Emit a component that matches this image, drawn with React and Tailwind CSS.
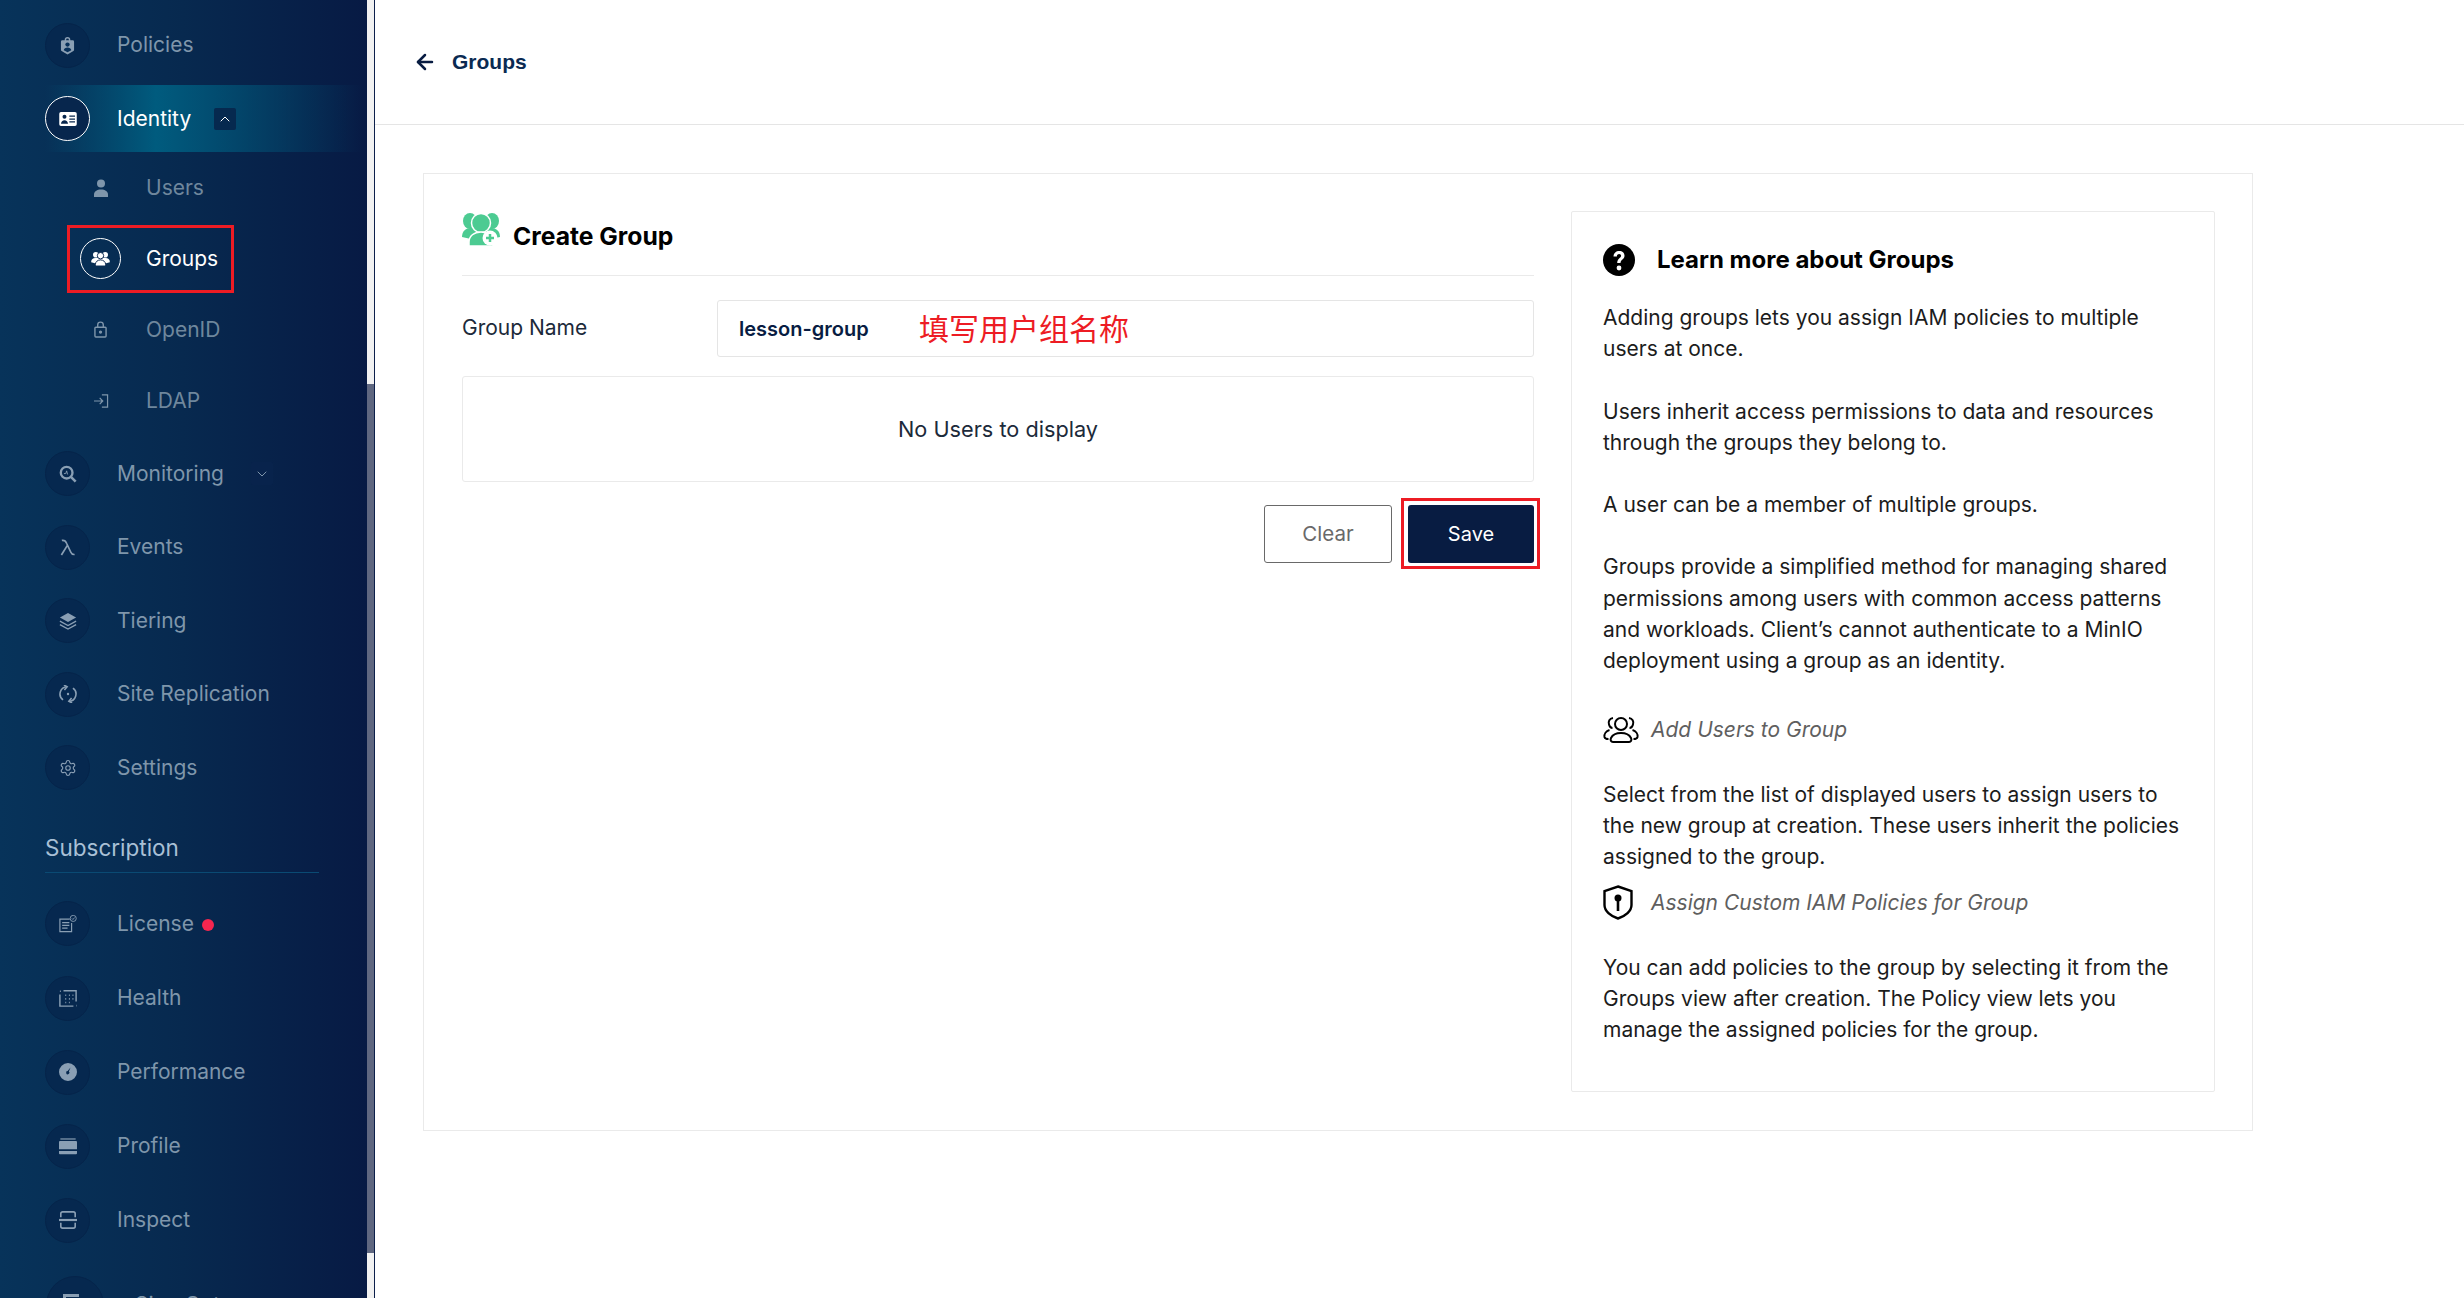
import { ArrowLeft, ChevronDown, ChevronUp, Settings } from "lucide-react"

const Shield = () => (
  <svg viewBox="0 0 16 20" className="w-[15px] h-[19px]" fill="currentColor">
    <path d="M5 4.500V4a3 3 0 0 1 6 0v.5h2.500A1.500 1.500 0 0 1 15 6v8.500c0 .5-.2 1-.7 1.300L8 19.500 1.700 15.800C1.200 15.500 1 15 1 14.500V6a1.500 1.500 0 0 1 1.500-1.500zM6.500 4.500h3V4a1.500 1.500 0 0 0-3 0z" />
    <circle cx="8" cy="9" r="2.300" fill="#07305a" />
    <path d="M4 15c.3-2 2-3 4-3s3.700 1 4 3l-4 2.300z" fill="#07305a" />
  </svg>
)

const IdCard = () => (
  <svg viewBox="0 0 20 16" className="w-[18px] h-[14px]" fill="currentColor">
    <path fillRule="evenodd" d="M2 0h16a2 2 0 0 1 2 2v12a2 2 0 0 1-2 2H2a2 2 0 0 1-2-2V2a2 2 0 0 1 2-2zM6 3.200a2.300 2.300 0 1 0 0 4.600 2.300 2.300 0 0 0 0-4.600zM2 13.500h8c0-2.500-1.800-4.200-4-4.200s-4 1.700-4 4.200zM11.500 4v1.500H18V4zM11.500 7.300v1.500H18V7.300zM11.500 10.500V12H18v-1.500z" />
  </svg>
)

const Person = () => (
  <svg viewBox="0 0 14 18" className="w-[14px] h-[18px]" fill="currentColor">
    <circle cx="7" cy="4.500" r="4" />
    <path d="M0 18v-2.500C0 12.500 3 10.500 7 10.500s7 2 7 5V18z" />
  </svg>
)

const Group = () => (
  <svg viewBox="0 0 20 16" className="w-[19px] h-[15px]" fill="currentColor">
    <circle cx="5" cy="4" r="3" />
    <circle cx="15" cy="4" r="3" />
    <path d="M0 12c0-3 2-4.500 4.500-4.500h11C18 7.500 20 9 20 12l-4 1H4z" />
    <circle cx="10" cy="5" r="3.400" stroke="#07244d" strokeWidth="1" />
    <path d="M4.500 16v-1.500C4.500 11.500 7 9.500 10 9.500s5.500 2 5.500 5V16z" stroke="#07244d" strokeWidth="1" />
  </svg>
)

const OpenLock = () => (
  <svg viewBox="0 0 14 18" className="w-[13px] h-[17px]" fill="none" stroke="currentColor" strokeWidth="1.500">
    <rect x="1" y="6.500" width="12" height="10.500" rx="1" />
    <path d="M4 6.500V4a3 3 0 0 1 6 0v2.500" />
    <circle cx="7" cy="11.800" r="1" fill="currentColor" />
  </svg>
)

const Login = () => (
  <svg viewBox="0 0 18 16" className="w-[16px] h-[14px]" fill="none" stroke="currentColor" strokeWidth="1.400">
    <path d="M10 1h6.500v14H10M1 8h10M7.500 4.500 11 8l-3.500 3.500" />
  </svg>
)

const Monitor = () => (
  <svg viewBox="0 0 20 20" className="w-[18px] h-[18px]" fill="none" stroke="currentColor">
    <circle cx="8.500" cy="8.500" r="6.500" strokeWidth="2.600" />
    <path d="M13.500 13.500 18.500 18.500" strokeWidth="2.800" />
    <path d="M5.500 9.500h2l1-3 1 4" strokeWidth="1" />
  </svg>
)

const Lambda = () => (
  <svg viewBox="0 0 18 18" className="w-[18px] h-[17px]" fill="none" stroke="currentColor" strokeWidth="1.800">
    <path d="M2.500 1.500c2.500-.5 4 .5 5 3L12 14c.7 1.700 1.800 2.600 4 2.400M8.500 6.500 2 17" />
  </svg>
)

const Layers = () => (
  <svg viewBox="0 0 20 20" className="w-[18px] h-[18px]" fill="currentColor">
    <path d="M10 1 19 6l-9 5-9-5z" />
    <path d="M1 10.200 10 15l9-4.800M1 14l9 5 9-5" fill="none" stroke="currentColor" strokeWidth="1.500" />
  </svg>
)

const Replicate = () => (
  <svg viewBox="0 0 20 20" className="w-[18px] h-[18px]" fill="none" stroke="currentColor" strokeWidth="1.800">
    <path d="M15.500 3.500A8 8 0 0 1 11 18M4.500 16.500A8 8 0 0 1 9 2" />
    <path d="M14 14.500 11 18l3.500 2M6 5.500 9 2 5.500 0" />
    <circle cx="10" cy="10" r="1.300" fill="currentColor" stroke="none" />
  </svg>
)

const License = () => (
  <svg viewBox="0 0 20 20" className="w-[18px] h-[18px]" fill="none" stroke="currentColor" strokeWidth="1.300">
    <path d="M12 4.500H1v14h13V9" />
    <path d="M3.500 8.500h8M3.500 11.500h8M3.500 14.500h6" />
    <circle cx="15.800" cy="3.800" r="3.400" strokeWidth="1" />
    <path d="m14.300 3.800 1.200 1.200 1.900-2.200" strokeWidth="1" />
  </svg>
)

const Health = () => (
  <svg viewBox="0 0 20 20" className="w-[18px] h-[18px]" fill="none" stroke="currentColor" strokeWidth="1.600">
    <path d="M5 2h14v12M1 6v13h15" />
    <path d="M1 2.500h1M19 18.500h.5M7 7h1M11 7h1M7 11h1M11 11h1M15 7h1M15 11h1M7 15h1M11 15h1" strokeWidth="1.800" />
  </svg>
)

const Gauge = () => (
  <svg viewBox="0 0 20 20" className="w-[18px] h-[18px]" fill="currentColor">
    <path fillRule="evenodd" d="M10 0a10 10 0 1 1 0 20 10 10 0 0 1 0-20zM11 9.500l1.800-4.500-3.200 4a1.800 1.800 0 1 0 1.400.500z" />
  </svg>
)

const Profile = () => (
  <svg viewBox="0 0 20 18" className="w-[18px] h-[17px]" fill="currentColor">
    <rect x="1.500" y="0" width="17" height="1.300" />
    <path d="M1 3h18a1 1 0 0 1 1 1v8H0V4a1 1 0 0 1 1-1z" />
    <path d="M0 14h20v2.500a1 1 0 0 1-1 1H1a1 1 0 0 1-1-1z" />
  </svg>
)

const Inspect = () => (
  <svg viewBox="0 0 20 20" className="w-[18px] h-[18px]" fill="none" stroke="currentColor" strokeWidth="1.800">
    <path d="M2 7V3a2 2 0 0 1 2-2h12a2 2 0 0 1 2 2v4M2 13v4a2 2 0 0 0 2 2h12a2 2 0 0 0 2-2v-4" />
    <path d="M0 10h20" strokeWidth="2.400" />
  </svg>
)

const TopItems = [
  { label: "Monitoring", icon: <Monitor />, h: "h-[73px]", chevron: true },
  { label: "Events", icon: <Lambda />, h: "h-[74px]" },
  { label: "Tiering", icon: <Layers />, h: "h-[73px]" },
  { label: "Site Replication", icon: <Replicate />, h: "h-[74px]" },
  { label: "Settings", icon: <Settings size={18} strokeWidth={1.5} />, h: "h-[73px]" },
]

const BottomItems = [
  { label: "License", icon: <License />, dot: true, h: "h-[75px]" },
  { label: "Health", icon: <Health /> },
  { label: "Performance", icon: <Gauge /> },
  { label: "Profile", icon: <Profile /> },
  { label: "Inspect", icon: <Inspect /> },
]

const NavItem = ({ label, icon, h = "h-[74px]", chevron, dot }) => (
  <div className={`${h} flex items-center pl-[45px] shrink-0`}>
    <div className="w-[45px] h-[45px] rounded-full bg-[#06284f] border border-[#05244a] flex items-center justify-center text-[#8a9fb4]">
      {icon}
    </div>
    <span className="ml-[27px] text-[21px] text-[#7f96ab]">{label}</span>
    {chevron && (
      <span className="ml-[27px] w-[22px] h-[23px] rounded-[2px] bg-[#08234c] flex items-center justify-center text-[#7f96ab]">
        <ChevronDown size={16} strokeWidth={1.5} />
      </span>
    )}
    {dot && <span className="ml-[8px] mt-[3px] w-[12px] h-[12px] rounded-full bg-[#f5264f]" />}
  </div>
)

const SubItem = ({ label, icon, h = "h-[71px]" }) => (
  <div className={`${h} flex items-center pl-[80px] shrink-0`}>
    <div className="w-[41px] flex items-center justify-center text-[#7f96ab]">{icon}</div>
    <span className="ml-[25px] text-[21px] text-[#6f879d]">{label}</span>
  </div>
)

const Sidebar = () => (
  <aside className="w-[367px] h-full shrink-0 overflow-hidden bg-[linear-gradient(90deg,#07335a,#07294f_50%,#071a44)] flex flex-col pt-[8px] font-['Inter',sans-serif]">
    <NavItem label="Policies" icon={<Shield />} />
    <div className="h-[67px] mt-[3px] ml-[45px] mr-[5px] shrink-0 flex items-center bg-[linear-gradient(90deg,#07335a00,#005b7e_35%,#07244d00)]">
      <div className="w-[45px] h-[45px] rounded-full bg-[#07264d] border border-white flex items-center justify-center text-white">
        <IdCard />
      </div>
      <span className="ml-[27px] text-[21px] text-white">Identity</span>
      <span className="ml-[23px] w-[22px] h-[22px] rounded-[2px] bg-[#06294f] flex items-center justify-center text-white">
        <ChevronUp size={16} strokeWidth={1.5} />
      </span>
    </div>
    <SubItem label="Users" icon={<Person />} />
    <div className="h-[71px] shrink-0 flex items-center pl-[67px]">
      <div className="w-[167px] h-[68px] border-[3px] border-[#ed1c24] flex items-center pl-[10px]">
        <div className="w-[41px] h-[41px] rounded-full border border-white flex items-center justify-center text-white">
          <Group />
        </div>
        <span className="ml-[25px] text-[21px] text-white">Groups</span>
      </div>
    </div>
    <SubItem label="OpenID" icon={<OpenLock />} />
    <SubItem label="LDAP" icon={<Login />} h="h-[72px]" />
    {TopItems.map((item) => (
      <NavItem key={item.label} {...item} />
    ))}
    <div className="ml-[45px] mr-[48px] mt-[31px] h-[38px] border-b border-[#0a4a73] shrink-0 text-[22.5px] leading-[26px] text-[#a9c0d6]">
      Subscription
    </div>
    <div className="h-[13px] shrink-0" />
    {BottomItems.map((item) => (
      <NavItem key={item.label} {...item} />
    ))}
    <div className="mt-[19px] pl-[46px] flex items-center shrink-0">
      <div className="w-[58px] h-[58px] rounded-full bg-[#06284f] border border-[#05244a] pt-[17px] pl-[16px] shrink-0">
        <div className="w-[16px] h-[18px] border-t-[3px] border-l-[3px] border-[#8a9fb4]" />
      </div>
      <span className="ml-[31px] text-[21px] text-[#7f96ab]">Sign Out</span>
    </div>
  </aside>
)

const Scrollbar = () => (
  <div className="w-[8px] h-full shrink-0 bg-[#f1f1f1] border-r border-[#0c1f4a] flex flex-col">
    <div className="h-[384px] shrink-0" />
    <div className="h-[869px] shrink-0 bg-[#5f6780]" />
  </div>
)

const HelpRow = ({ icon, children, className }) => (
  <div className={`flex items-center h-[32px] ${className}`}>
    <div className="w-[48px] shrink-0 text-black">{icon}</div>
    <span className="italic text-[#5f5f5f]">{children}</span>
  </div>
)

const HelpBox = () => (
  <div className="w-[644px] h-[881px] shrink-0 -mt-[1px] border border-[#eaeaea] rounded-[2px] pt-[32px] pl-[31px] pr-[30px] text-[21px] leading-[31.3px] text-[#1c1c1c]">
    <div className="flex items-center h-[32px]">
      <svg viewBox="0 0 32 32" className="w-[32px] h-[32px] shrink-0">
        <circle cx="16" cy="16" r="16" fill="#000" />
        <path d="M10.500 12.500c0-3.200 2.400-5.500 5.700-5.500s5.300 2 5.300 4.700c0 3.800-4 3.600-4 7.300h-3.300c0-5 3.900-4.800 3.900-7.300 0-1-.8-1.800-2-1.800-1.300 0-2.200 1-2.200 2.600z" fill="#fff" />
        <circle cx="16" cy="24" r="2.400" fill="#fff" />
      </svg>
      <h2 className="ml-[22px] text-[24px] font-bold text-black">Learn more about Groups</h2>
    </div>
    <p className="mt-[26px]">Adding groups lets you assign IAM policies to multiple users at once.</p>
    <p className="mt-[31px]">Users inherit access permissions to data and resources through the groups they belong to.</p>
    <p className="mt-[31px]">A user can be a member of multiple groups.</p>
    <p className="mt-[31px]">
      Groups provide a simplified method for managing shared permissions among users with common access patterns and workloads. Client’s cannot authenticate to a MinIO deployment using a group as an identity.
    </p>
    <HelpRow
      className="mt-[37px]"
      icon={
        <svg viewBox="0 0 36 27" className="w-[36px] h-[27px]" fill="none" stroke="currentColor" strokeWidth="2">
          <circle cx="18" cy="8" r="6" />
          <path d="M10 26c-2 0-3-2-2-4 1.500-3 5-5 10-5s8.500 2 10 5c1 2 0 4-2 4z" />
          <path d="M10 2C6.500 2.500 5 5.500 6 8.500 6.500 10.500 8 12 9.500 12M26 2c3.500.5 5 3.500 4 6.500-.5 2-2 3.500-3.500 3.500" />
          <path d="M6.500 14C3 15 1 18 1.500 21c.3 1.500 2 2 4 2M29.500 14c3.500 1 5.500 4 5 7-.3 1.500-2 2-4 2" />
        </svg>
      }
    >
      Add Users to Group
    </HelpRow>
    <p className="mt-[33px]">
      Select from the list of displayed users to assign users to the new group at creation. These users inherit the policies assigned to the group.
    </p>
    <HelpRow
      className="mt-[14px]"
      icon={
        <svg viewBox="0 0 30 35" className="w-[30px] h-[35px]" fill="none" stroke="currentColor" strokeWidth="2.400">
          <path d="M15 1.500 28.500 6v14c0 6-6 11-13.500 13.500C7.500 31 1.500 26 1.500 20V6z" />
          <circle cx="15" cy="13" r="3.500" fill="currentColor" stroke="none" />
          <path d="M15 14v12" strokeWidth="2.600" />
        </svg>
      }
    >
      Assign Custom IAM Policies for Group
    </HelpRow>
    <p className="mt-[33px]">
      You can add policies to the group by selecting it from the Groups view after creation. The Policy view lets you manage the assigned policies for the group.
    </p>
  </div>
)

const CreateForm = () => (
  <div className="w-[1072px] shrink-0 text-[21px] text-[#1c2a3a]">
    <div className="h-[64px] border-b border-[#eaeaea] flex items-start">
      <svg viewBox="0 0 38 34" className="w-[38px] h-[34px] shrink-0" fill="#4ccb92">
        <ellipse cx="8" cy="9" rx="7" ry="8" />
        <ellipse cx="30" cy="9" rx="7" ry="8" />
        <path d="M0 25c0-6 4-9 9-9h20c5 0 9 3 9 9l-9 2H9z" />
        <circle cx="19" cy="11" r="9.500" stroke="#fff" strokeWidth="1.500" />
        <path d="M7 34v-4c0-6 5-10 12-10s12 4 12 10v4z" stroke="#fff" strokeWidth="1.500" />
        <circle cx="28" cy="26" r="7.500" fill="#fff" />
        <path d="M28 22v8M24 26h8" stroke="#4ccb92" strokeWidth="2.500" />
      </svg>
      <h1 className="ml-[13px] mt-[9px] text-[24.7px] leading-[30px] font-bold text-black">Create Group</h1>
    </div>
    <div className="mt-[24px] flex items-center">
      <label className="w-[255px] shrink-0 -mt-[2px]">Group Name</label>
      <div className="relative flex-1 h-[57px] border border-[#e5e5e5] rounded-[3px] flex items-center pl-[21px] text-[20px] font-semibold text-[#081c42]">
        lesson-group
        <span className="absolute left-[201px] top-[8px] text-[30px] leading-[36px] font-normal text-[#ed1c24] font-['Noto_Sans_CJK_SC',sans-serif]">
          填写用户组名称
        </span>
      </div>
    </div>
    <div className="mt-[19px] h-[106px] border border-[#eaeaea] rounded-[3px] flex items-center justify-center text-[21.7px]">
      No Users to display
    </div>
    <div className="mt-[23px] flex justify-end gap-[16px]">
      <button className="w-[128px] h-[58px] border border-[#696969] rounded-[3px] text-[#696969] text-[20.5px]">Clear</button>
      <div className="relative">
        <button className="w-[126px] h-[58px] bg-[#081c42] rounded-[3px] text-white text-[20px]">Save</button>
        <div className="absolute -left-[7px] -right-[6px] -top-[7px] -bottom-[6px] border-[3px] border-[#ed1c24]" />
      </div>
    </div>
  </div>
)

export default function App() {
  return (
    <div className="flex w-[2464px] h-[1298px] overflow-hidden bg-white font-['Inter',sans-serif]">
      <Sidebar />
      <Scrollbar />
      <main className="flex-1 min-w-0">
        <header className="h-[125px] border-b border-[#e5e5e5] flex items-center pl-[38px] text-[#0a2a52]">
          <ArrowLeft size={24} strokeWidth={2.5} className="text-[#081c42]" />
          <span className="ml-[15px] text-[21px] font-bold font-['Liberation_Sans',sans-serif]">Groups</span>
        </header>
        <div className="pt-[48px] pl-[48px]">
          <div className="w-[1830px] h-[958px] border border-[#eaeaea] pt-[38px] pl-[38px] flex gap-[37px]">
            <CreateForm />
            <HelpBox />
          </div>
        </div>
      </main>
    </div>
  )
}
